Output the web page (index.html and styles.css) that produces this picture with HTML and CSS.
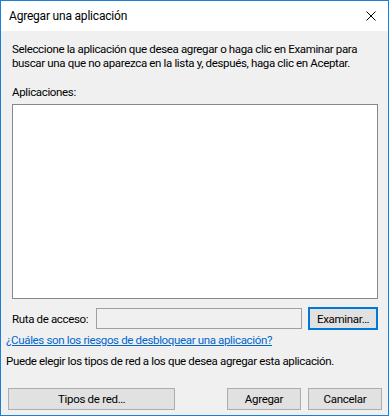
FILE: index.html
```html
<!DOCTYPE html>
<html lang="es">
<head>
<meta charset="utf-8">
<title>Agregar una aplicación</title>
<link rel="stylesheet" href="styles.css">
</head>
<body>
<div class="window">
  <div class="titlebar">
    <span class="title">Agregar una aplicación</span>
    <svg class="close" width="10" height="10" viewBox="0 0 10 10"><path d="M0.5 0.5 L9.5 9.5 M9.5 0.5 L0.5 9.5" stroke="#000" stroke-width="1" fill="none"/></svg>
  </div>
  <div class="content">
    <p class="intro">Seleccione la aplicación que desea agregar o haga clic en Examinar para<br>buscar una que no aparezca en la lista y, después, haga clic en Aceptar.</p>
    <div class="label">Aplicaciones:</div>
    <div class="listbox"></div>
    <div class="pathrow">
      <span class="pathlabel">Ruta de acceso:</span>
      <div class="input"></div>
      <button class="btn btn-focus">Examinar…</button>
    </div>
    <a class="link" href="#">¿Cuáles son los riesgos de desbloquear una aplicación?</a>
    <p class="note">Puede elegir los tipos de red a los que desea agregar esta aplicación.</p>
    <div class="buttons">
      <button class="btn btn-wide">Tipos de red…</button>
      <div class="spacer"></div>
      <button class="btn btn-std">Agregar</button>
      <button class="btn btn-std">Cancelar</button>
    </div>
  </div>
</div>
</body>
</html>
```
FILE: styles.css
```css
* { box-sizing: border-box; }
html, body { margin: 0; padding: 0; background: #f0f0f0; }
body {
  font-family: Roboto, "Liberation Sans", sans-serif;
  font-size: 11.5px;
  letter-spacing: -0.35px;
  line-height: 14px;
  color: #000;
  white-space: nowrap;
}
.window {
  width: 389px;
  height: 416px;
  border: 1px solid #1a7fd5;
  background: #f0f0f0;
  display: flex;
  flex-direction: column;
  overflow: hidden;
}
.titlebar {
  height: 30px;
  flex: none;
  background: #fff;
  display: flex;
  align-items: center;
  padding: 0 12px 0 8px;
}
.title { flex: 1; padding-bottom: 1px; font-size: 12px; letter-spacing: -0.2px; }
.close { display: block; margin-bottom: 1px; }
.content {
  flex: 1;
  display: flex;
  flex-direction: column;
  padding: 11px 10px 5px 11px;
}
.intro { margin: 0; }
.label { margin-top: 15px; }
.listbox {
  margin-top: 5px;
  height: 195px;
  flex: none;
  background: #fff;
  border: 1px solid #828790;
}
.pathrow {
  margin-top: 8px;
  display: flex;
  align-items: center;
  height: 23px;
  flex: none;
}
.pathlabel { width: 84px; flex: none; }
.input {
  width: 206px;
  height: 21px;
  flex: none;
  border: 1px solid #a0a0a0;
  background: #f0f0f0;
}
.btn {
  font-family: inherit;
  font-size: 11.5px;
  letter-spacing: -0.3px;
  line-height: 14px;
  color: #000;
  background: #e1e1e1;
  border: 1px solid #adadad;
  padding: 0;
  height: 22px;
  margin: 0;
  flex: none;
}
.btn-focus {
  margin-left: 6px;
  width: 70px;
  height: 23px;
  border: 2px solid #0078d7;
}
.link {
  margin: 3px 0 0 -6px;
  color: #0066cc;
  text-decoration: underline;
  align-self: flex-start;
}
.note { margin: 7px 0 0 -6px; }
.buttons {
  margin-top: auto;
  display: flex;
  margin-left: -4px;
  margin-right: -4px;
}
.btn-wide { width: 167px; }
.spacer { flex: 1; }
.btn-std { width: 74px; margin-left: 7px; }
```
